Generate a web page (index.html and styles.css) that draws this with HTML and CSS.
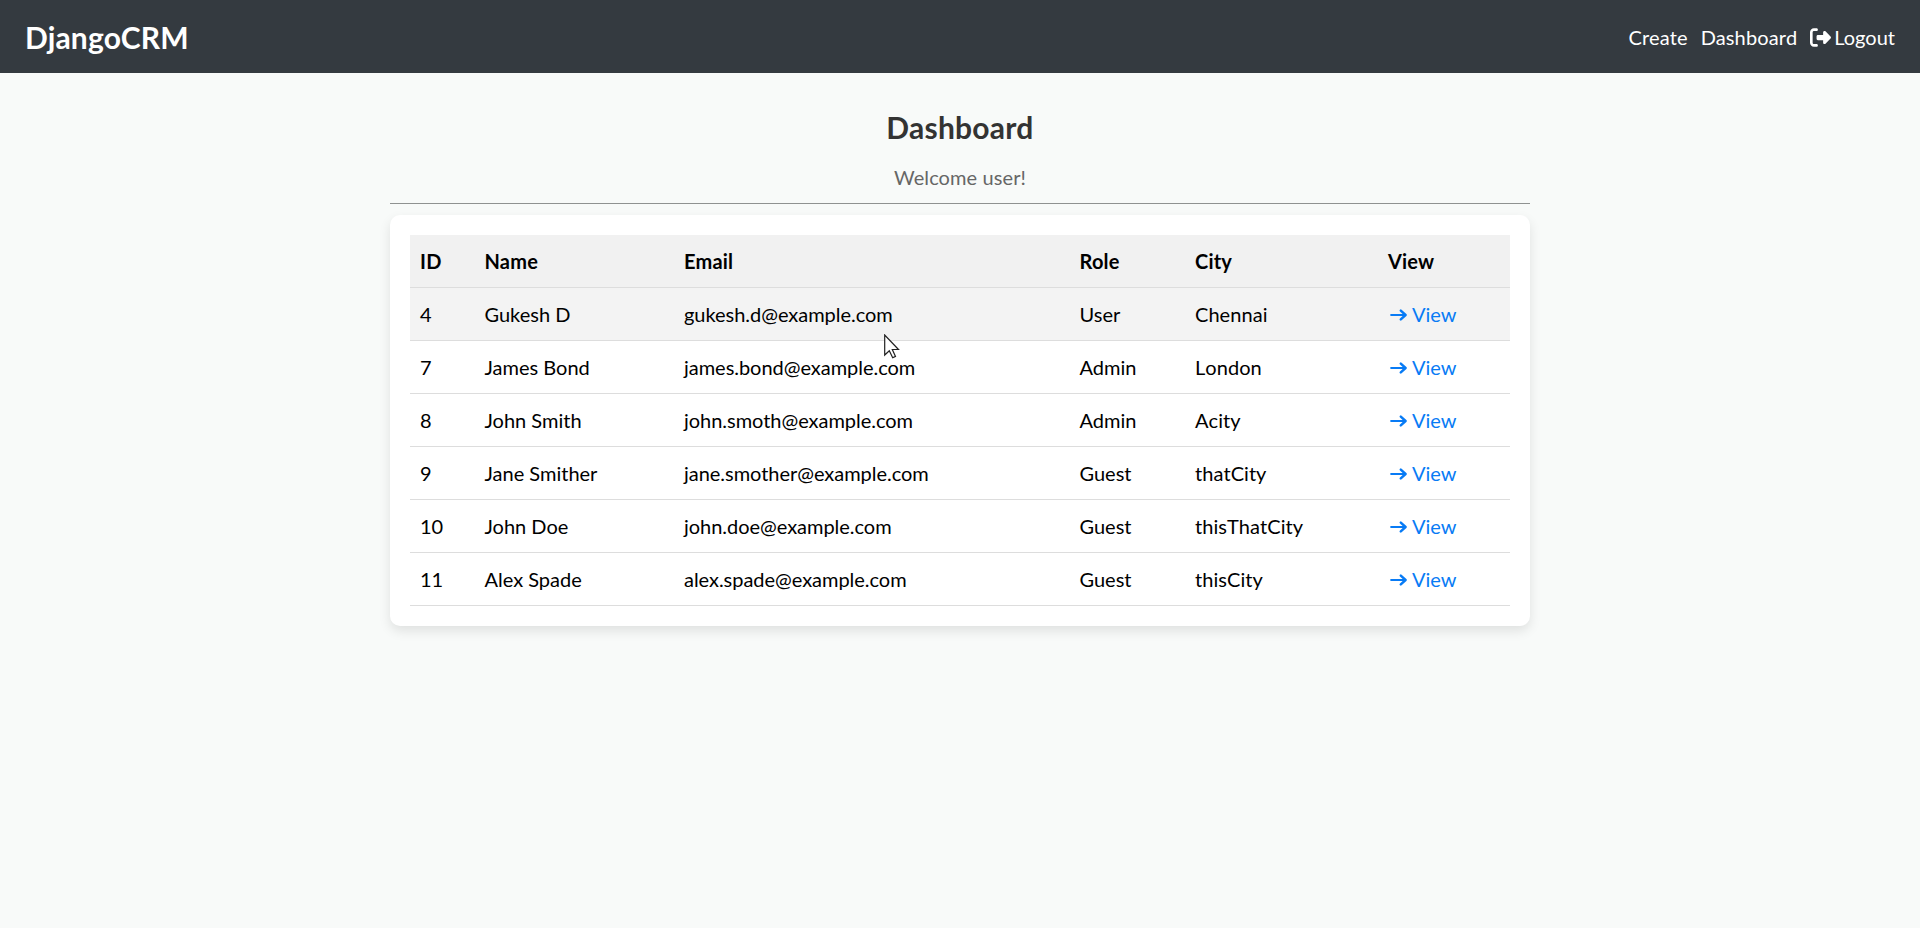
FILE: index.html
```html
<!DOCTYPE html>
<html lang="en">
<head>
<meta charset="utf-8">
<title>Dashboard</title>
<link rel="stylesheet" href="styles.css">
</head>
<body>
<svg class="defs" width="0" height="0" aria-hidden="true">
  <symbol id="arrow" viewBox="0 0 17 12"><path d="M1.200 6H14.500" fill="none" stroke="currentColor" stroke-width="2.200" stroke-linecap="round"/><path d="M10.800 1.600 15.600 6 10.800 10.400" fill="none" stroke="currentColor" stroke-width="2.400" stroke-linecap="round" stroke-linejoin="round"/></symbol>
</svg>
<header class="navbar">
  <a class="brand">DjangoCRM</a>
  <nav class="links">
    <a>Create</a>
    <a>Dashboard</a>
    <a class="logout"><svg class="logout-icon" viewBox="0 0 512 512" aria-hidden="true"><path fill="currentColor" d="M377.900 105.900L500.700 228.700c7.200 7.200 11.300 17.100 11.300 27.300s-4.100 20.100-11.300 27.300L377.900 406.100c-6.400 6.400-15 9.900-24 9.900c-18.700 0-33.900-15.200-33.900-33.900V320H192c-17.700 0-32-14.300-32-32V224c0-17.700 14.300-32 32-32H320V129.900c0-18.700 15.200-33.900 33.900-33.900c9 0 17.600 3.600 24 9.900zM160 96H96c-17.700 0-32 14.300-32 32V384c0 17.700 14.300 32 32 32h64c17.700 0 32 14.300 32 32s-14.300 32-32 32H96c-53 0-96-43-96-96V128C0 75 43 32 96 32h64c17.700 0 32 14.300 32 32s-14.300 32-32 32z"/></svg><span>Logout</span></a>
  </nav>
</header>
<main class="container">
  <h1 class="title">Dashboard</h1>
  <p class="welcome">Welcome user!</p>
  <hr class="rule">
  <section class="card">
    <table class="records">
      <colgroup><col class="c-id"><col class="c-name"><col class="c-email"><col class="c-role"><col class="c-city"><col class="c-view"></colgroup>
      <thead><tr><th>ID</th><th>Name</th><th>Email</th><th>Role</th><th>City</th><th>View</th></tr></thead>
      <tbody>
        <tr class="hovered"><td>4</td><td>Gukesh D</td><td class="email">gukesh.d@example.com</td><td>User</td><td class="city">Chennai</td><td><a class="view"><svg class="arrow"><use href="#arrow"/></svg>View</a></td></tr>
        <tr><td>7</td><td>James Bond</td><td class="email">james.bond@example.com</td><td>Admin</td><td class="city">London</td><td><a class="view"><svg class="arrow"><use href="#arrow"/></svg>View</a></td></tr>
        <tr><td>8</td><td>John Smith</td><td class="email">john.smoth@example.com</td><td>Admin</td><td class="city">Acity</td><td><a class="view"><svg class="arrow"><use href="#arrow"/></svg>View</a></td></tr>
        <tr><td>9</td><td>Jane Smither</td><td class="email">jane.smother@example.com</td><td>Guest</td><td class="city">thatCity</td><td><a class="view"><svg class="arrow"><use href="#arrow"/></svg>View</a></td></tr>
        <tr><td>10</td><td>John Doe</td><td class="email">john.doe@example.com</td><td>Guest</td><td class="city">thisThatCity</td><td><a class="view"><svg class="arrow"><use href="#arrow"/></svg>View</a></td></tr>
        <tr><td>11</td><td>Alex Spade</td><td class="email">alex.spade@example.com</td><td>Guest</td><td class="city">thisCity</td><td><a class="view"><svg class="arrow"><use href="#arrow"/></svg>View</a></td></tr>
      </tbody>
    </table>
  </section>
</main>
<svg class="cursor" viewBox="0 0 16 25" aria-hidden="true"><path d="M.7 1v20l4.600-4.300 3.400 7 2.800-1.300-3.200-6.900h6.200z" fill="#fff" stroke="#222" stroke-width="1.200"/></svg>
</body>
</html>
```

FILE: styles.css
```css
* { box-sizing: border-box; }
body {
  margin: 0;
  min-height: 100vh;
  background: #f8faf9;
  font-family: Lato, sans-serif;
  font-size: 20px;
  line-height: 32px;
  font-variant-ligatures: none;
  color: #000;
}
.defs { position: absolute; }
.navbar {
  height: 73px;
  padding: 1px 25px 0;
  display: flex;
  align-items: center;
  justify-content: space-between;
  background: #343a40;
  color: #fff;
}
.brand { font-size: 30px; font-weight: 700; letter-spacing: 0.15px; }
.links { display: flex; gap: 13px; letter-spacing: 0.15px; }
.logout { display: flex; align-items: center; gap: 3px; letter-spacing: 0; }
.logout-icon { width: 21px; height: 21px; }
.container { width: 1140px; margin: 0 auto; padding-top: 30px; }
.title {
  margin: 0;
  font-size: 30px;
  line-height: 48px;
  font-weight: 700;
  letter-spacing: 0.25px;
  text-align: center;
  color: #333;
}
.welcome { margin: 10px 0; letter-spacing: 0.1px; text-align: center; color: #666; }
.rule { margin: 0; border: 0; border-top: 1px solid #8f9291; }
.card {
  margin-top: 11px;
  padding: 20px;
  background: #fff;
  border-radius: 10px;
  box-shadow: 0 5px 12px rgba(0, 0, 0, 0.1);
}
.records { width: 100%; table-layout: fixed; border-collapse: separate; border-spacing: 0; }
.c-id { width: 64.5px; }
.c-name { width: 199.5px; }
.c-email { width: 395.5px; }
.c-role { width: 115.5px; }
.c-city { width: 193px; }
.records th, .records td {
  height: 53px;
  padding: 0 10px;
  border-bottom: 1px solid #ddd;
  text-align: left;
  vertical-align: middle;
}
.records th { background: #f1f1f1; font-weight: 700; letter-spacing: 0.2px; }
.records .email { letter-spacing: -0.03px; }
.records .city { font-kerning: none; letter-spacing: 0.05px; }
.hovered td { background: #f3f3f3; }
.view { display: flex; align-items: center; gap: 5px; padding-left: 2px; color: #087bf5; }
.arrow { width: 17px; height: 12px; margin-top: 1px; }
.cursor { position: absolute; left: 884px; top: 334px; width: 16px; height: 25px; }
```
